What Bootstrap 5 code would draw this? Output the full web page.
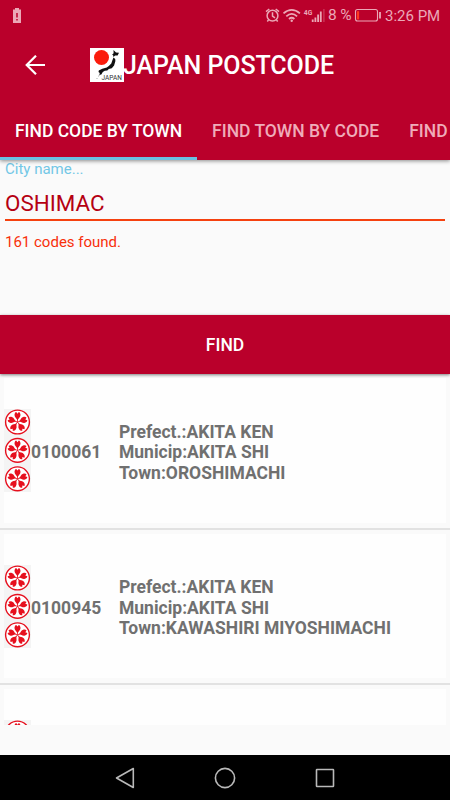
<!DOCTYPE html>
<html lang="en">
<head>
<meta charset="utf-8">
<meta name="viewport" content="width=device-width, initial-scale=1">
<title>Japan Postcode</title>
<link href="https://cdn.jsdelivr.net/npm/bootstrap@5.3.0/dist/css/bootstrap.min.css" rel="stylesheet">
<style>
body{font-family:Roboto,"Liberation Sans",sans-serif;background:#fafafa;width:450px;height:800px;overflow:hidden}
svg{display:block;flex:none}
.topbar{background:#ba002b;height:160px;box-shadow:0 1px 4px rgba(0,0,0,.45);z-index:2}
.status{height:30px;color:#eba8b7;font-size:15px;line-height:30px;padding:0 10px 0 12px}
.clock{width:55px;padding-top:2px;white-space:nowrap}
.titlebar{height:71px;padding-left:25px}
.brand{font-size:25px;letter-spacing:-.07px;font-weight:500;line-height:30px;padding-top:1px;margin-left:-1px}
.tabs{height:59px}
.tabs .nav-link{color:#efacba;font-size:17.5px;letter-spacing:-.02px;font-weight:500;line-height:20px;padding:20px 15px 16px;border-radius:0;border-bottom:3px solid transparent;height:59px;white-space:nowrap}
.tabs .nav-link.active{color:#fff;border-bottom-color:#6bc0e2}
.entry{height:155px;padding:0 5px}
.entry label{color:#72c7e6;font-size:15px;line-height:18px;height:19px}
.entry .form-control{color:#b50012;font-size:22.4px;line-height:28px;height:42px;padding:7px 0 0;background:transparent;border:0;border-bottom:2px solid #f5410f;border-radius:0;box-shadow:none}
.found{color:#f8300a;font-size:15px;line-height:18px;margin-top:12px}
.find{height:59px;background:#ba002b!important;font-size:17.5px;padding-top:8px;box-shadow:0 1px 3px rgba(0,0,0,.5);z-index:1}
.results{height:351px}
.result{height:155px;padding:4px 4px 5px;border-bottom:2px solid #e2e2e2!important;background:#fafafa}
.result:first-child{height:156px}
.sheet{background:#fefefe;color:#707070;font-size:17.5px;font-weight:700;line-height:20.4px}
.seals{width:27px;background:#f4f4f4}
.code{width:88px;padding-top:4px}
.place{padding-top:4px}
.sysbar{background:#000;height:45px}
</style>
</head>
<body>
<svg width="0" height="0" class="position-absolute">
<defs>
<path id="petal" d="M0-1.500C-.8-3.800-3-4.300-3-6.900C-3-8.500-2.200-9.600-1.300-9.900L0-8.200L1.300-9.900C2.200-9.600 3-8.500 3-6.900C3-4.300 .8-3.800 0-1.500Z" fill="#e6101e"/>
<g id="seal">
<circle r="11.900" fill="#fff" stroke="#e6101e" stroke-width="1.400"/>
<use href="#petal"/><use href="#petal" transform="rotate(72)"/><use href="#petal" transform="rotate(144)"/><use href="#petal" transform="rotate(216)"/><use href="#petal" transform="rotate(288)"/>
<path d="M0 0V-3.500M0 0L3.300-1.100M0 0L2.100 2.800M0 0L-2.100 2.800M0 0L-3.300-1.100" stroke="#e6101e" stroke-width=".8"/>
</g>
<g id="seals"><use href="#seal" x="13.5" y="13"/><use href="#seal" x="13.5" y="41.4"/><use href="#seal" x="13.5" y="69.8"/></g>
</defs>
</svg>
<div class="d-flex flex-column vh-100">
<header class="topbar position-relative flex-shrink-0">
  <div class="status d-flex align-items-center">
    <svg width="10" height="15" viewBox="0 0 10 15"><path d="M3 0h4v1.500h2V15H1V1.500h2z" fill="#eba8b7"/><path d="M5 5v4.500M5 11v1.500" stroke="#ba002b" stroke-width="1.500"/></svg>
    <svg class="ms-auto" width="121" height="18" viewBox="0 0 121 18" fill="none" stroke="#eba8b7">
      <g stroke-width="1.500"><circle cx="8.500" cy="9.700" r="5.400"/><path d="M8.500 6.200V10l2.500 1.800M2 5.600L5.300 3M15 5.600L11.700 3M4.500 14l-1.200 1.500M12.500 14l1.200 1.500"/>
      <path d="M19.500 7.400q8.200-7 16.400 0M22.300 10.300q5.400-4.800 10.800 0M25 13q2.700-2.400 5.400 0" stroke-width="1.800"/></g>
      <circle cx="27.700" cy="14.700" r="1.200" fill="#eba8b7" stroke="none"/>
      <text x="39.800" y="8.500" fill="#eba8b7" stroke="none" font-size="8" font-weight="700" textLength="8.500" lengthAdjust="spacingAndGlyphs">4G</text>
      <path d="M48.700 13.500V16M51.400 11.500V16M54.100 8.500V16M56.800 5.500V16" stroke-width="1.800"/><path d="M59.900 3V16" stroke-width="1.300" opacity=".35"/>
      <text x="64" y="14" fill="#eba8b7" stroke="none" font-size="15.500" textLength="23.500">8 %</text>
      <rect x="91.500" y="3.500" width="22" height="11.500" rx="2" stroke-width="1.100"/><path d="M116 6v6.500" stroke-width="1.800"/><path d="M94 5.200v8.200" stroke="#ff3820" stroke-width="2.200"/>
    </svg>
    <span class="clock">3:26 PM</span>
  </div>
  <div class="titlebar d-flex align-items-center text-white">
    <svg width="65" height="22" viewBox="0 1 65 22" fill="none" stroke="#fff" stroke-width="2.200"><path d="M20 11H2M11 1.700L1.700 11L11 20.300"/></svg>
    <svg width="34" height="36" viewBox="0 0 34 36"><path fill="#fff" d="M0 0h34v34H0z"/><circle cx="11.500" cy="9.500" r="7.500" fill="#fb1c0c"/><path d="M23.500 2l2.500 2.500 3 .3-1.400 2.600-2.500.2-1.600 1.300-.4-1.600-1-.5 1.500-1.500z" fill="#111"/><path d="M23.500 9.500l1.700 1.500.2 2-1.300 4.500-2.300 2.700-3 .7-1.500 1.500-2.500.4-2 1.200-1.500 2.500-2 .5.500-2-1.300-1 .3-1.500 3.500-1.700 4.500-1.300 2-1.500 2.500-2.500 1-3z" fill="#111"/><path d="M10 26l-1.500 2.500M7.500 30l-1 1" stroke="#888" stroke-width=".7"/><text x="11.500" y="31.600" font-size="6.500" fill="#333" textLength="20.500">JAPAN</text></svg>
    <span class="brand">JAPAN POSTCODE</span>
  </div>
  <nav class="tabs nav flex-nowrap overflow-hidden">
    <a class="nav-link active" href="#">FIND CODE BY TOWN</a>
    <a class="nav-link" href="#">FIND TOWN BY CODE</a>
    <a class="nav-link" href="#">FIND</a>
  </nav>
</header>
<main class="flex-grow-1 overflow-hidden">
  <div class="entry">
    <label for="city" class="d-block">City name...</label>
    <input id="city" class="form-control" value="OSHIMAC">
    <div class="found">161 codes found.</div>
  </div>
  <button class="find btn text-white fw-medium w-100 rounded-0 border-0 position-relative d-block">FIND</button>
  <div class="results overflow-hidden">
    <div class="result border-0">
      <div class="sheet h-100 d-flex align-items-center">
        <svg class="seals" width="27" height="83" viewBox="0 0 27 83"><use href="#seals"/></svg>
        <span class="code">0100061</span>
        <div class="place">Prefect.:AKITA KEN<br>Municip:AKITA SHI<br>Town:OROSHIMACHI</div>
      </div>
    </div>
    <div class="result border-0">
      <div class="sheet h-100 d-flex align-items-center">
        <svg class="seals" width="27" height="83" viewBox="0 0 27 83"><use href="#seals"/></svg>
        <span class="code">0100945</span>
        <div class="place">Prefect.:AKITA KEN<br>Municip:AKITA SHI<br>Town:KAWASHIRI MIYOSHIMACHI</div>
      </div>
    </div>
    <div class="result border-0">
      <div class="sheet h-100 d-flex align-items-center">
        <svg class="seals" width="27" height="83" viewBox="0 0 27 83"><use href="#seals"/></svg>
      </div>
    </div>
  </div>
</main>
<footer class="sysbar d-flex align-items-center flex-shrink-0 justify-content-center">
  <svg width="220" height="24" viewBox="0 0 220 24" fill="none" stroke="#b9b9b9" stroke-width="1.600"><path d="M18.300 2.500V21.500L1.500 12Z" stroke-linejoin="round"/><circle cx="110" cy="12" r="9.600"/><rect x="201.500" y="3.500" width="17" height="17" rx=".5"/></svg>
</footer>
</div>
<script src="https://cdn.jsdelivr.net/npm/bootstrap@5.3.0/dist/js/bootstrap.bundle.min.js"></script>
</body>
</html>
